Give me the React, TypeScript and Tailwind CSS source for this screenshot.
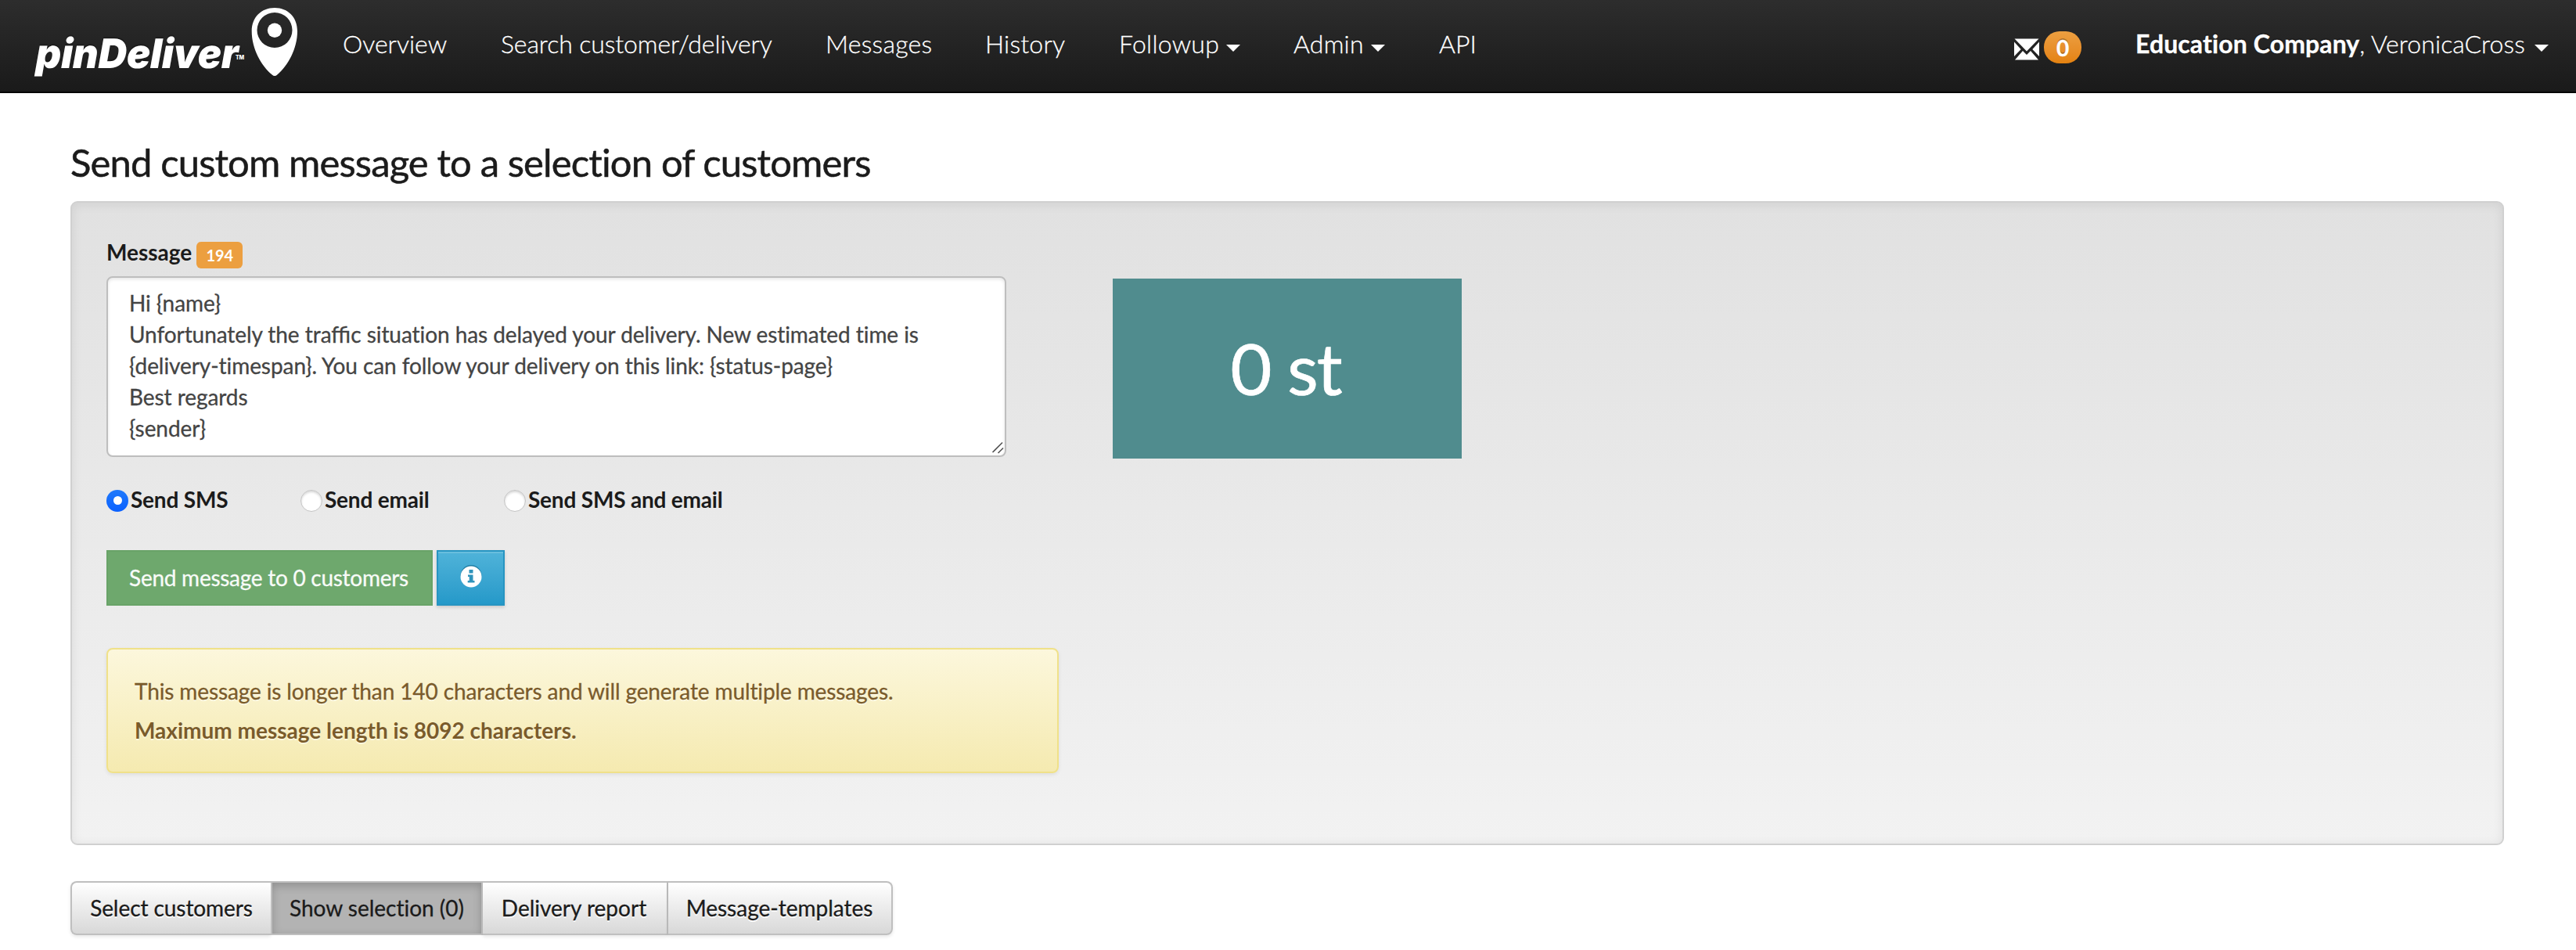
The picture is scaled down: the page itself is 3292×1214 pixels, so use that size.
import React from "react";

const navLink = "flex items-center whitespace-nowrap";

function Caret() {
  return (
    <span className="mt-[11px] ml-[9px] inline-block h-0 w-0 border-x-[9px] border-t-[9px] border-x-transparent border-t-white" />
  );
}

function Logo() {
  return (
    <svg width="350" height="108" viewBox="0 0 350 108" className="shrink-0" fill="#fff">
      <text
        x="0"
        y="0"
        transform="translate(15.5 86.5) skewX(-1)"
        fontFamily="Inter, sans-serif"
        fontWeight="900"
        fontStyle="italic"
        fontSize="52"
        textLength="259"
        lengthAdjust="spacingAndGlyphs"
      >
        pinDeliver
      </text>
      <text x="271" y="76" fontFamily="Inter, sans-serif" fontWeight="800" fontSize="7" textLength="11">
        TM
      </text>
      <path
        fillRule="evenodd"
        d="M321 10c-17 0-29.300 12-29.300 30 0 22 12 44 26 55.500q3.300 3 6.600 0C338 84 350 62 350 40 350 22 338 10 321 10zM321 16a22.500 22.500 0 1 1 0 45 22.500 22.500 0 1 1 0-45z"
      />
      <circle cx="321" cy="38.800" r="9.200" />
    </svg>
  );
}

function NavBar() {
  return (
    <header className="flex h-[119px] items-start border-b-2 border-[#050505] bg-linear-to-b from-[#2d2d2d] to-[#1a1a1a] pl-[30px] text-[32px] leading-[40px] font-light text-white [-webkit-text-stroke:0.3px] [text-shadow:0_-2px_0_rgba(0,0,0,0.25)]">
      <Logo />
      <nav className="flex pt-[36px] pl-[58px]">
        <a className={navLink + " w-[202px]"}>Overview</a>
        <a className={navLink + " w-[415px] tracking-[-0.1px]"}>Search customer/delivery</a>
        <a className={navLink + " w-[204px] tracking-[0.25px]"}>Messages</a>
        <a className={navLink + " w-[171px] tracking-[0.2px]"}>History</a>
        <a className={navLink + " w-[223px] tracking-[0.25px]"}>
          Followup
          <Caret />
        </a>
        <a className={navLink + " w-[186px] tracking-[0.2px]"}>
          Admin
          <Caret />
        </a>
        <a className={navLink}>API</a>
      </nav>
      <div className="ml-auto flex items-start pr-[35px]">
        <div className="mt-[40px] flex h-[41px] items-start">
          <svg width="32" height="28" viewBox="0 0 32 28" className="mt-[9px]" fill="#fff">
            <path d="M.5.500h31L16 16.500z" />
            <path d="M0 4.500l8.700 9.500L0 23z" />
            <path d="M32 4.500L23.300 14 32 23z" />
            <path d="M1 27.500L11 16l5 5 5-5 10 11.500z" />
          </svg>
          <span className="ml-[6px] flex h-[41px] w-[48px] items-center justify-center rounded-[20px] bg-linear-to-b from-[#ec9f40] to-[#e4820f] text-[28px] font-bold">
            0
          </span>
        </div>
        <div className={navLink + " mt-[36px] ml-[69px] w-[528px] justify-between tracking-[0.1px]"}>
          <span>
            <b className="font-bold">Education Company</b>, VeronicaCross
          </span>
          <Caret />
        </div>
      </div>
    </header>
  );
}

function Radio({ label, checked, className }: { label: string; checked?: boolean; className: string }) {
  return (
    <label
      className={"flex items-center gap-[3px] font-bold tracking-[-0.2px] whitespace-nowrap " + className}
    >
      {checked ? (
        <span className="mt-[3px] flex size-[28px] items-center justify-center rounded-full bg-linear-to-b from-[#2079fb] to-[#0a60ff]">
          <span className="size-[11px] rounded-full bg-white" />
        </span>
      ) : (
        <span className="mt-[3px] size-[28px] rounded-full border border-[#c4c4c4] bg-white shadow-[inset_0_2px_3px_rgba(0,0,0,0.16)]" />
      )}
      {label}
    </label>
  );
}

function MessagePanel() {
  return (
    <section className="flex h-[823px] rounded-[9px] border-2 border-[#d0d0d0] bg-linear-to-b from-[#e1e1e1] to-[#f2f2f2] pt-[43px] pl-[44px] shadow-[inset_0_2px_14px_rgba(0,0,0,0.08)]">
      <div className="w-[1286px]">
        <div className="flex h-[51px] items-start leading-[40px] font-bold">
          Message
          <span className="mt-[7px] ml-[6px] flex h-[34px] w-[59px] items-center justify-center rounded-[6px] bg-[#ec9f40] text-[20px] text-white">
            194
          </span>
        </div>
        <div className="relative h-[231px] w-[1150px] rounded-[8px] border-2 border-[#bebebe] bg-white px-[27px] pt-[12px] leading-[40px] tracking-[-0.07px] whitespace-nowrap text-[#444] shadow-[inset_0_2px_4px_rgba(0,0,0,0.1)] [-webkit-text-stroke:0.3px]">
          <div>Hi {"{name}"}</div>
          <div>
            Unfortunately the <span className="tracking-normal">traffic</span> situation has delayed your
            delivery. New estimated time is
          </div>
          <div>{"{delivery-timespan}. You can follow your delivery on this link: {status-page}"}</div>
          <div>Best regards</div>
          <div>{"{sender}"}</div>
          <svg
            className="absolute right-[1px] bottom-[2px]"
            width="16"
            height="16"
            viewBox="0 0 16 16"
            stroke="#555"
            strokeWidth="1.600"
          >
            <path d="M1.500 14L14 1.500M8.500 15L15 8.500" />
          </svg>
        </div>
        <div className="mt-[34px] flex h-[40px] items-center">
          <Radio label="Send SMS" checked className="w-[248px]" />
          <Radio label="Send email" className="w-[260px]" />
          <Radio label="Send SMS and email" className="" />
        </div>
        <div className="mt-[45px] flex gap-[5px] [text-shadow:0_-2px_0_rgba(0,0,0,0.2)]">
          <button className="flex h-[71px] w-[417px] items-center justify-center border-2 border-[#69a368] bg-[#6ea86d] pr-[2px] pb-[2px] tracking-[-0.27px] whitespace-nowrap text-[#f8fbf8] [-webkit-text-stroke:0.3px]">
            Send message to 0 customers
          </button>
          <button className="flex h-[71px] w-[87px] items-center justify-center border-2 border-[#2795c2] bg-linear-to-b from-[#4fb3d9] to-[#2499c9] shadow-[inset_0_2px_0_rgba(255,255,255,0.15),0_2px_4px_rgba(0,0,0,0.15)]">
            <svg width="28" height="31" viewBox="0 0 28 31" className="-mt-[5px]">
              <circle cx="14" cy="14.500" r="13.500" fill="#1e7ca3" />
              <circle cx="14" cy="16" r="13.500" fill="#fff" />
              <path d="M11.500 7h5v4.500h-5zM10 13.500h6.500v7.500h2v2.500H9.700V21h2v-5H10z" fill="#2f93bb" />
            </svg>
          </button>
        </div>
        <div className="mt-[54px] h-[160px] w-[1217px] rounded-[8px] border-2 border-[#f0e189] bg-linear-to-b from-[#fcf7dc] to-[#f5eab0] pt-[28px] pl-[34px] leading-[50px] text-[#7a5b2b] shadow-[0_2px_5px_rgba(0,0,0,0.08)] [text-shadow:0_2px_0_rgba(255,255,255,0.5)]">
          <p className="tracking-[-0.12px] [-webkit-text-stroke:0.3px]">
            This message is longer than 140 characters and will generate multiple messages.
          </p>
          <p className="font-bold">Maximum message length is 8092 characters.</p>
        </div>
      </div>
      <div className="mt-[54px] flex h-[230px] w-[446px] items-center justify-center bg-[#508c8e] pr-[4px] pb-[2px] text-[92px] leading-none tracking-[-2px] text-white [-webkit-text-stroke:0.6px]">
        0 st
      </div>
    </section>
  );
}

const tab = "flex items-center justify-center border-y-2 border-[#bfbfbf] pb-[2px] whitespace-nowrap";
const idle =
  " bg-linear-to-b from-white to-[#d8d8d8] [text-shadow:0_2px_0_#fff] shadow-[0_2px_4px_rgba(0,0,0,0.1)]";

function Tabs() {
  return (
    <div className="mt-[46px] flex h-[69px] [-webkit-text-stroke:0.3px]">
      <button className={tab + idle + " w-[256px] rounded-l-[8px] border-l-2 tracking-[-0.07px]"}>
        Select customers
      </button>
      <button
        className={
          tab + " w-[271px] border-x-2 border-[#acacac] bg-[#b3b3b3] shadow-[inset_0_4px_12px_rgba(0,0,0,0.2)]"
        }
      >
        Show selection (0)
      </button>
      <button className={tab + idle + " w-[237px] border-r-2 pr-[2px]"}>Delivery report</button>
      <button className={tab + idle + " w-[287px] rounded-r-[8px] border-r-2 pr-[1px]"}>
        Message-templates
      </button>
    </div>
  );
}

export default function App() {
  return (
    <div className="h-[1214px] w-[3292px] overflow-hidden bg-white font-['Lato',sans-serif] text-[28px] text-[#1b1b1b] [font-variant-ligatures:none] [&_.tracking-normal]:[font-variant-ligatures:normal]">
      <NavBar />
      <main className="pr-[92px] pl-[90px]">
        <h3 className="h-[138px] pt-[48px] text-[49px] leading-[80px] font-normal tracking-[-0.88px] [-webkit-text-stroke:0.5px]">
          Send custom message to a selection of customers
        </h3>
        <MessagePanel />
        <Tabs />
      </main>
    </div>
  );
}
